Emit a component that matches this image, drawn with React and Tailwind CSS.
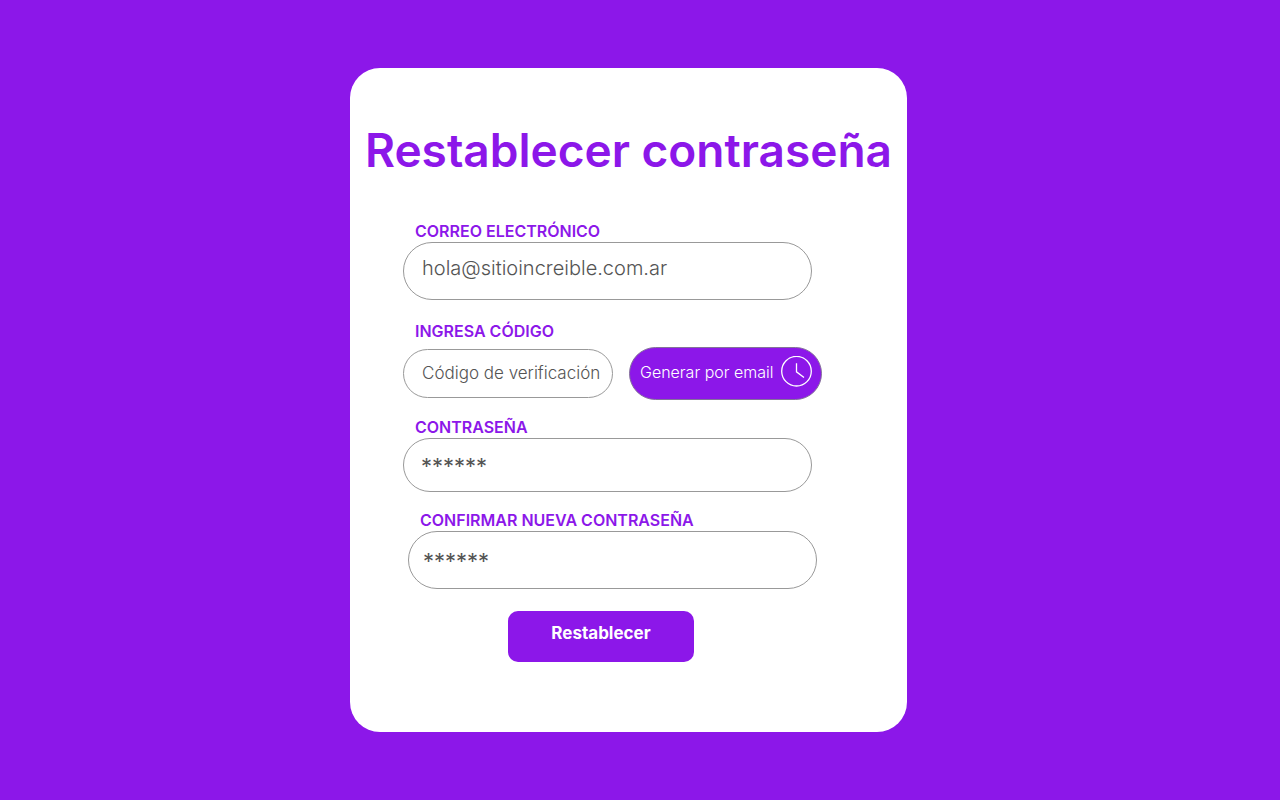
import React from "react";

const labelClass = "block h-5 pl-3 text-[16px] leading-[18px] font-semibold text-[#8c17e9]";
const fieldClass =
  "block w-full rounded-full border border-[#999999] bg-white text-[#545454] placeholder:text-[#545454] placeholder:opacity-100 focus:outline-2 focus:outline-[#8c17e9]";

function ClockIcon() {
  return (
    <svg
      className="size-8 shrink-0"
      viewBox="0 0 32 32"
      fill="none"
      stroke="currentColor"
      strokeWidth="1.3"
      aria-hidden="true"
    >
      <circle cx="15.5" cy="15.2" r="14.8" />
      <path d="M15.5 7.2v8.6l7.5 5.6" />
    </svg>
  );
}

export default function App() {
  return (
    <main className="flex min-h-screen items-center justify-center bg-[#8c17e9] pr-[23px] font-['Inter',sans-serif]">
      <section className="w-full max-w-[557px] rounded-[30px] bg-white pt-[54px] pb-[70px]">
        <h1 className="text-center text-[46px] leading-[56px] font-semibold whitespace-nowrap text-[#8c17e9]">
          Restablecer contraseña
        </h1>

        <form className="mt-11 flex flex-col pr-[85px] pl-[53px]" onSubmit={(e) => e.preventDefault()}>
          <div className="w-full max-w-[409px]">
            <label htmlFor="email" className={labelClass}>
              CORREO ELECTRÓNICO
            </label>
            <input
              id="email"
              type="email"
              placeholder="hola@sitioincreible.com.ar"
              className={`${fieldClass} h-[58px] px-[18px] pb-[6px] text-[20px] font-light`}
            />
          </div>

          <div className="mt-[22px]">
            <label htmlFor="code" className={labelClass}>
              INGRESA CÓDIGO
            </label>
            <div className="mt-[5px] flex items-center gap-4">
              <input
                id="code"
                type="text"
                placeholder="Código de verificación"
                className={`${fieldClass} h-[49px] max-w-[210px] pb-[2px] pl-[18px] text-[17px] font-light`}
              />
              <button
                type="button"
                className="flex h-[53px] w-[193px] shrink-0 items-center justify-between rounded-full border border-[#84729a] bg-[#8c17e9] pr-2 pb-[3px] pl-[10px] text-[16px] font-light whitespace-nowrap text-white"
              >
                Generar por email
                <ClockIcon />
              </button>
            </div>
          </div>

          <div className="mt-[18px] w-full max-w-[409px]">
            <label htmlFor="password" className={labelClass}>
              CONTRASEÑA
            </label>
            <input
              id="password"
              type="password"
              placeholder="******"
              className={`${fieldClass} h-[54px] px-[17px] pt-[2px] text-[22px]`}
            />
          </div>

          <div className="mt-[19px] ml-[5px] w-full max-w-[409px]">
            <label htmlFor="confirm" className={labelClass}>
              CONFIRMAR NUEVA CONTRASEÑA
            </label>
            <input
              id="confirm"
              type="password"
              placeholder="******"
              className={`${fieldClass} h-[58px] px-[14px] pt-[2px] text-[22px]`}
            />
          </div>

          <button
            type="submit"
            className="mt-[22px] ml-[105px] h-[51px] w-[186px] rounded-[10px] bg-[#8c17e9] pb-[5px] text-[17px] font-bold text-white"
          >
            Restablecer
          </button>
        </form>
      </section>
    </main>
  );
}
